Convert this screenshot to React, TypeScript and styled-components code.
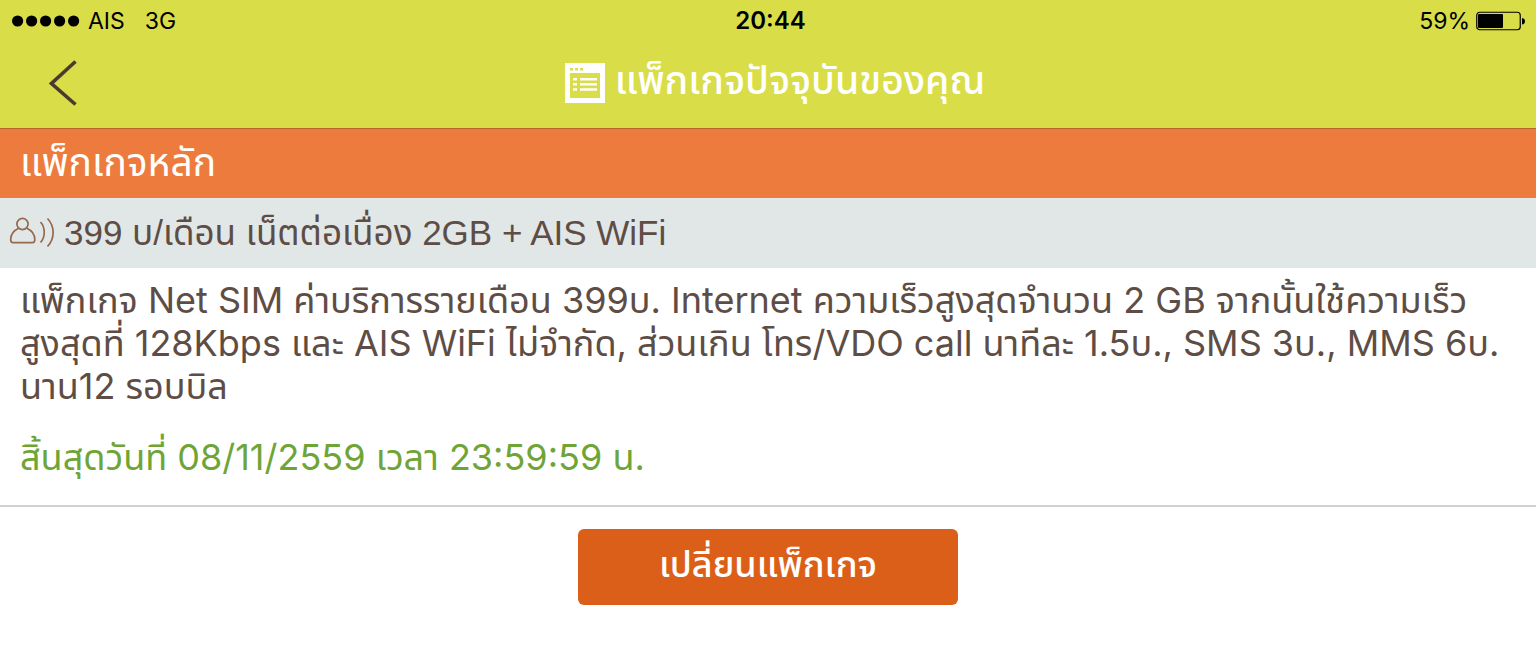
import React from "react";
import styled, { createGlobalStyle } from "styled-components";

const reading = `Inter, "Noto Sans Thai", "Noto Sans", sans-serif`;
const brand = `"Liberation Sans", "Noto Sans Thai", "Noto Sans", sans-serif`;

const GlobalStyle = createGlobalStyle`
  *, *::before, *::after { box-sizing: border-box; }
  body { margin: 0; background: #fff; font-family: ${reading}; color: #5e4d45; }
  h1, h2, h3, p { margin: 0; font-weight: 400; }
`;

const Header = styled.header`
  background: #d8dd48;
  border-bottom: 1px solid #b5682a;
`;

const StatusBar = styled.div`
  display: grid;
  grid-template-columns: 1fr auto 1fr;
  align-items: center;
  height: 42px;
  padding: 0 11px 0 12px;
  color: #000;
  font-size: 24px;
  line-height: 28px;
`;

const StatusGroup = styled.div<{ $end?: boolean }>`
  display: flex;
  align-items: center;
  justify-content: ${(p) => (p.$end ? "flex-end" : "flex-start")};
  gap: ${(p) => (p.$end ? 6 : 8)}px;
  font-size: 23px;
`;

const Network = styled.span`
  margin-left: 12px;
`;

const Clock = styled.time`
  padding-left: 4px;
  font-weight: 600;
`;

const NavBar = styled.nav`
  display: grid;
  grid-template-columns: 100px 1fr 86px;
  align-items: center;
  height: 86px;
`;

const BackButton = styled.button`
  display: flex;
  justify-content: center;
  padding: 0 0 4px 26px;
  border: 0;
  background: none;
  cursor: pointer;
`;

const Title = styled.h1`
  display: flex;
  align-items: center;
  justify-content: center;
  gap: 10px;
  padding-bottom: 4px;
  color: #fff;
  font: 500 39px/56px ${brand};
`;

const TitleText = styled.span`
  padding-bottom: 4px;
`;

const SectionTitle = styled.h2`
  height: 69px;
  padding: 0 20px;
  background: #ed7b3e;
  color: #fff;
  font: 400 39px/67px ${brand};
`;

const PackageName = styled.h3`
  display: flex;
  align-items: center;
  gap: 9px;
  height: 70px;
  padding: 0 9px;
  background: #e1e7e7;
  font: 400 35px/70px ${brand};
`;

const Details = styled.section`
  padding: 11px 20px 26px;
  border-bottom: 2px solid #d0d0d0;
  font-size: 36px;
  line-height: 43px;
`;

const Line = styled.span`
  display: block;
  white-space: nowrap;
`;

const Expiry = styled.p`
  margin-top: 28px;
  color: #6fa536;
`;

const Actions = styled.div`
  display: flex;
  justify-content: center;
  padding: 22px 20px 45px;
`;

const PrimaryButton = styled.button`
  width: 380px;
  height: 76px;
  padding: 0 0 4px;
  border: 0;
  border-radius: 6px;
  background: #dc5f19;
  color: #fff;
  font: 500 36px/60px ${brand};
  cursor: pointer;
`;

const SignalIcon = () => (
  <svg width="68" height="12" viewBox="0 0 68 12" aria-label="Signal">
    {[0, 1, 2, 3, 4].map((i) => (
      <circle key={i} cx={5.6 + i * 14} cy="6" r="5.6" fill="#000" />
    ))}
  </svg>
);

const BatteryIcon = () => (
  <svg width="49" height="20" viewBox="0 0 49 20" aria-label="Battery">
    <rect x="0.75" y="1.25" width="43.5" height="17.5" rx="3" fill="none" stroke="#000" strokeWidth="1.2" />
    <rect x="2" y="3" width="25" height="14" rx="1" fill="#000" />
    <path d="M46 7c2 .3 3 1.500 3 3.200s-1 3-3 3.300z" fill="#000" />
  </svg>
);

const BackIcon = () => (
  <svg width="28" height="46" viewBox="0 0 28 46" fill="none" stroke="#4d3a2e" strokeWidth="3.600">
    <path d="M26.500 1.500 2.500 23.500 26.500 44.500" />
  </svg>
);

const ListIcon = () => (
  <svg width="40" height="40" viewBox="0 0 40 40">
    <path fill="#fff" fillRule="evenodd" d="M0 0h40v40H0zM5 10h30v25H5z" />
    <path fill="#d8dd48" d="M5 5h3v2.500H5zM10 5h3v2.500h-3zM15 5h3v2.500h-3z" />
    <path fill="#fff" d="M8 15h4v2.600H8zM15 15h17v2.600H15zM8 20h4v2.600H8zM15 20h17v2.600H15zM8 25.200h4v2.600H8zM15 25.200h17v2.600H15z" />
  </svg>
);

const VoiceIcon = () => (
  <svg width="46" height="32" viewBox="0 0 46 32" fill="none" stroke="#94694e" strokeWidth="1.700">
    <circle cx="13.500" cy="7" r="5.600" />
    <path d="M9.700 11.200C5 13.300 1.700 17.800 1.700 22.500c0 2.200.6 3.200 2.300 3.200h19.500c1.700 0 2.300-1 2.300-3.200 0-4.700-3.300-9.200-8-11.300" />
    <path d="M31.500 5c5 5.500 5 15 0 20.500M38.500 1.500c7.500 8 7.500 20 0 28" />
  </svg>
);

export default function App() {
  return (
    <>
      <GlobalStyle />
      <Header>
        <StatusBar>
          <StatusGroup>
            <SignalIcon />
            <span>AIS</span>
            <Network>3G</Network>
          </StatusGroup>
          <Clock>20:44</Clock>
          <StatusGroup $end>
            <span>59%</span>
            <BatteryIcon />
          </StatusGroup>
        </StatusBar>
        <NavBar>
          <BackButton aria-label="ย้อนกลับ">
            <BackIcon />
          </BackButton>
          <Title>
            <ListIcon />
            <TitleText>แพ็กเกจปัจจุบันของคุณ</TitleText>
          </Title>
        </NavBar>
      </Header>
      <main>
        <SectionTitle>แพ็กเกจหลัก</SectionTitle>
        <PackageName>
          <VoiceIcon />
          399 บ/เดือน เน็ตต่อเนื่อง 2GB + AIS WiFi
        </PackageName>
        <Details>
          <p>
            <Line>แพ็กเกจ Net SIM ค่าบริการรายเดือน 399บ. Internet ความเร็วสูงสุดจำนวน 2 GB จากนั้นใช้ความเร็ว</Line>
            <Line>สูงสุดที่ 128Kbps และ AIS WiFi ไม่จำกัด, ส่วนเกิน โทร/VDO call นาทีละ 1.5บ., SMS 3บ., MMS 6บ.</Line>
            <Line>นาน12 รอบบิล</Line>
          </p>
          <Expiry>สิ้นสุดวันที่ 08/11/2559 เวลา 23:59:59 น.</Expiry>
        </Details>
        <Actions>
          <PrimaryButton type="button">เปลี่ยนแพ็กเกจ</PrimaryButton>
        </Actions>
      </main>
    </>
  );
}
